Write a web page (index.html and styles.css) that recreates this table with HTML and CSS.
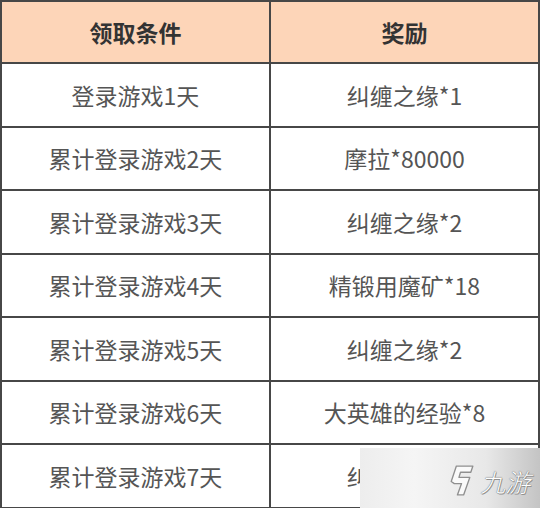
FILE: index.html
```html
<!DOCTYPE html>
<html lang="zh">
<head>
<meta charset="utf-8">
<link rel="stylesheet" href="styles.css">
</head>
<body>
<div class="wrap">
<table class="tbl">
  <thead>
    <tr class="head"><th>领取条件</th><th>奖励</th></tr>
  </thead>
  <tbody>
    <tr><td>登录游戏1天</td><td>纠缠之缘*1</td></tr>
    <tr><td>累计登录游戏2天</td><td>摩拉*80000</td></tr>
    <tr><td>累计登录游戏3天</td><td>纠缠之缘*2</td></tr>
    <tr><td>累计登录游戏4天</td><td>精锻用魔矿*18</td></tr>
    <tr><td>累计登录游戏5天</td><td>纠缠之缘*2</td></tr>
    <tr><td>累计登录游戏6天</td><td>大英雄的经验*8</td></tr>
    <tr><td>累计登录游戏7天</td><td>纠缠之缘*3</td></tr>
  </tbody>
</table>
<div class="mark">
  <svg class="logo" viewBox="0 0 26 32" width="27" height="33">
    <path d="M9 2 L25 2 L23 8 L13 8 L11.5 13 L22 13 L16 30 L10 30 L14 19 L7 19 L4 17 Z" fill="#fafafa" stroke="#8f8f8f" stroke-width="1.3" stroke-linejoin="round"/>
  </svg>
  <span class="brand">九游</span>
</div>
</div>
</body>
</html>
```
FILE: styles.css
```css
html, body {
  margin: 0;
  padding: 0;
  background: #fff;
}
.wrap {
  position: relative;
  width: 540px;
  height: 508px;
  overflow: hidden;
}
.tbl {
  width: 540px;
  border-collapse: collapse;
  table-layout: fixed;
  font-family: "Noto Sans CJK SC", "Noto Sans", sans-serif;
  font-size: 23px;
}
.tbl th, .tbl td {
  border: 2px solid #474747;
  text-align: center;
  vertical-align: middle;
  padding: 0;
}
.tbl th {
  background: #fdd5b8;
  color: #333;
  font-weight: 700;
  height: 60px;
}
.tbl td {
  color: #555;
  font-weight: 400;
  height: 61.5px;
}
.mark {
  position: absolute;
  left: 360px;
  top: 448px;
  width: 180px;
  height: 60px;
  background: linear-gradient(90deg, #ededed 0%, #f5f5f5 30%, #e8e8e8 70%, #c4c4c4 100%);
  display: flex;
  align-items: center;
  justify-content: flex-end;
  gap: 9px;
  padding-right: 7px;
  box-sizing: border-box;
}
.logo {
  display: block;
  margin-top: 4px;
}
.brand {
  font-family: "Noto Sans CJK SC", sans-serif;
  font-size: 25px;
  font-weight: 300;
  color: #fff;
  transform: skewX(-14deg);
  text-shadow: 0 0 1px #777, 0 0 1px #777, 1px 1px 0 #999;
  margin-top: 6px;
}
```
